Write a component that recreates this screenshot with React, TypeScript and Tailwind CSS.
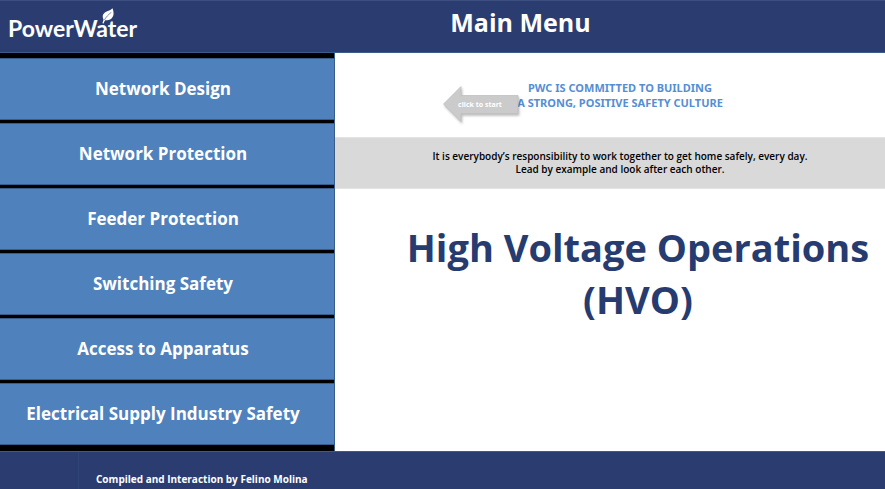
const menuItems = [
  'Network Design',
  'Network Protection',
  'Feeder Protection',
  'Switching Safety',
  'Access to Apparatus',
  'Electrical Supply Industry Safety',
];

function Logo() {
  return (
    <a href="#" aria-label="PowerWater" className="relative mt-[10px] w-[148px] shrink-0 font-['Lato',sans-serif] text-[23px] leading-7 font-bold text-white">
      PowerWater
      <svg viewBox="0 0 12 16" className="absolute -top-[6px] left-[94px] h-4 w-3" aria-hidden="true">
        <path d="M10.500 0.200C12 4 12.200 8 9.500 10.500C7.500 12.300 5 12.200 3.200 12.200C2.500 13 2 14 1.600 15.500L0.500 15.200C0.700 14 1 12.800 1.600 11.800C0 8.500 0.600 6 3.200 4.200C5.800 2.500 9 2.500 10.500 0.200Z" fill="#fff" />
        <path d="M9.300 4.300C6.500 6.500 4 9 2.400 12" fill="none" stroke="#2b3d70" strokeWidth="0.6" />
      </svg>
    </a>
  );
}

function StartButton() {
  return (
    <button type="button" className="absolute top-[33px] left-[108px] h-[38px] w-[76px] cursor-pointer pr-[2px] text-[7px] leading-3 text-white">
      <svg viewBox="0 0 76 38" className="absolute inset-0 h-full w-full overflow-visible drop-shadow-[1px_2px_1px_rgba(0,0,0,0.25)]" aria-hidden="true">
        <path d="M0.500 18L18 0.500V9.500H75V27.500H18V35.500Z" fill="#cbcbcb" stroke="#bfbfbf" strokeWidth="0.8" />
      </svg>
      <span className="relative">click to start</span>
    </button>
  );
}

export default function App() {
  return (
    <div className="flex min-h-screen flex-col bg-white font-['Open_Sans',sans-serif] font-bold">
      <header className="flex items-start border-t border-b border-t-[#3c4f80] border-b-[#385d8a] bg-[#2b3d70] pt-[3px] pb-[10px] pl-2">
        <Logo />
        <h1 className="flex-1 text-center text-[25px] leading-9 text-white">Main Menu</h1>
      </header>

      <div className="flex flex-1">
        <nav className="flex w-[335px] shrink-0 flex-col gap-[3px] border-r border-[#385d8a] bg-black pt-[5px] pb-[6px]">
          {menuItems.map((item) => (
            <button
              key={item}
              type="button"
              className="flex-1 cursor-pointer border-y border-[#385d8a] bg-[#4f81bd] py-[18px] pr-2 text-[17px] leading-6 text-white"
            >
              {item}
            </button>
          ))}
        </nav>

        <main className="relative min-w-0 flex-1 text-center">
          <p className="pt-[27px] pb-[27px] pl-5 font-['Noto_Sans',sans-serif] text-[11px] leading-[15px] text-[#558ed5]">
            PWC IS COMMITTED TO BUILDING
            <br />A STRONG, POSITIVE SAFETY CULTURE
          </p>
          <StartButton />
          <p className="border-y border-[#e3e3e3] bg-[#d9d9d9] py-3 pl-5 text-[10px] leading-[13px] font-semibold text-black">
            It is everybody’s responsibility to work together to get home safely, every day.
            <br />
            Lead by example and look after each other.
          </p>
          <h2 className="pt-8 pl-14 text-[38px] leading-[52px] text-[#263c70]">
            High Voltage Operations
            <br />
            (HVO)
          </h2>
        </main>
      </div>

      <footer className="border-t border-[#385d8a] bg-[#2b3d70]">
        <p className="ml-[78px] border-l border-[#304577] pt-[19px] pb-[2px] pl-[17px] text-[10px] leading-4 text-white">
          Compiled and Interaction by Felino Molina
        </p>
      </footer>
    </div>
  );
}
